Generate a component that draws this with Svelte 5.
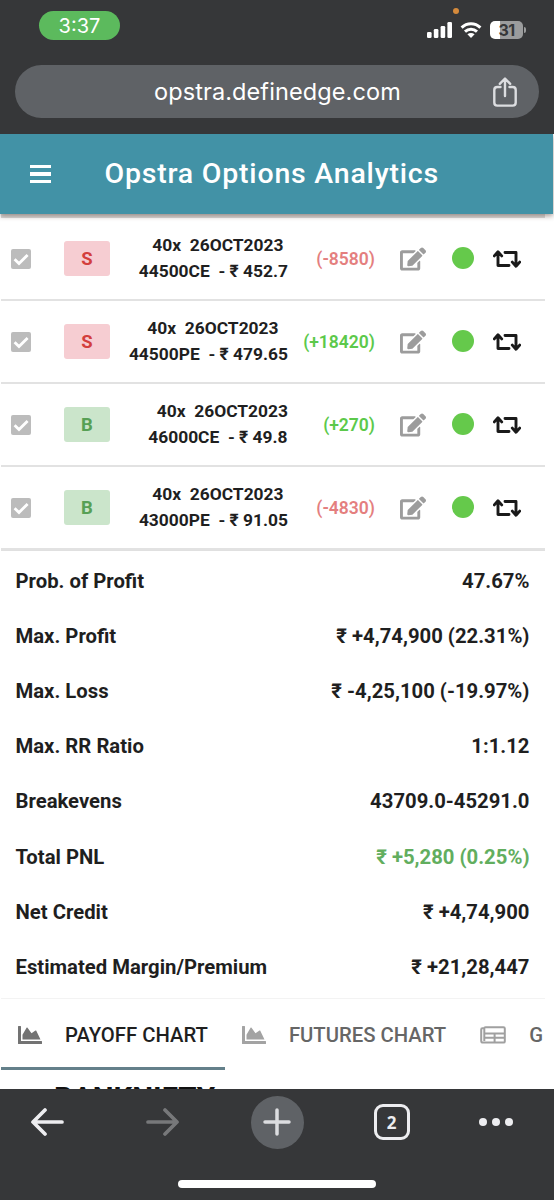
<script>
    let positions = [
        { side: 'S', qty: '40x', expiry: '26OCT2023', strike: '44500CE', price: '452.7', pnl: '-8580' },
        { side: 'S', qty: '40x', expiry: '26OCT2023', strike: '44500PE', price: '479.65', pnl: '+18420' },
        { side: 'B', qty: '40x', expiry: '26OCT2023', strike: '46000CE', price: '49.8', pnl: '+270' },
        { side: 'B', qty: '40x', expiry: '26OCT2023', strike: '43000PE', price: '91.05', pnl: '-4830' }
    ];

    let stats = [
        { label: 'Prob. of Profit', value: '47.67%' },
        { label: 'Max. Profit', value: '₹ +4,74,900 (22.31%)' },
        { label: 'Max. Loss', value: '₹ -4,25,100 (-19.97%)' },
        { label: 'Max. RR Ratio', value: '1:1.12' },
        { label: 'Breakevens', value: '43709.0-45291.0' },
        { label: 'Total PNL', value: '₹ +5,280 (0.25%)', gain: true },
        { label: 'Net Credit', value: '₹ +4,74,900' },
        { label: 'Estimated Margin/Premium', value: '₹ +21,28,447' }
    ];

    let tabs = [
        { label: 'PAYOFF CHART', icon: 'chart' },
        { label: 'FUTURES CHART', icon: 'chart' },
        { label: 'G', icon: 'table' }
    ];
    let activeTab = 0;
</script>

<div class="phone">
    <header class="browser-top">
        <div class="status">
            <span class="time">3:37</span>
            <span class="mic-dot"></span>
            <div class="status-icons">
                <svg class="signal" viewBox="0 0 26 16">
                    <rect x="0" y="10" width="4.6" height="6" rx="1.3" />
                    <rect x="6.8" y="7" width="4.6" height="9" rx="1.3" />
                    <rect x="13.6" y="4" width="4.6" height="12" rx="1.3" />
                    <rect x="20.4" y="0" width="4.6" height="16" rx="1.3" />
                </svg>
                <svg class="wifi" viewBox="0 0 22 16">
                    <path d="M1.6 5.6C7 .4 15 .4 20.4 5.6" />
                    <path d="M5 9.6C8.5 6.4 13.5 6.4 17 9.6" />
                    <path class="fill" d="M7.4 12.3Q11 9.6 14.6 12.3L11 16Z" />
                </svg>
                <div class="battery"><span>31</span></div>
                <span class="nub"></span>
            </div>
        </div>
        <div class="url-bar">
            <span class="url">opstra.definedge.com</span>
            <svg class="share" viewBox="0 0 24 30">
                <path d="M7.5 10H4.3Q1.3 10 1.3 13V25.5Q1.3 28.6 4.3 28.6H19.7Q22.7 28.6 22.7 25.5V13Q22.7 10 19.7 10H16.5M12 19V1.8M6.8 6.8L12 1.5L17.2 6.8" />
            </svg>
        </div>
    </header>

    <main>
        <div class="app-bar">
            <div class="burger"><i></i><i></i><i></i></div>
            <h1>Opstra Options Analytics</h1>
        </div>

        <div class="card">
            <div class="positions">
                {#each positions as pos}
                    <div class="row">
                        <span class="check">
                            <svg viewBox="0 0 20 20"><path d="M3.6 10.2L8 14.5L16.6 5.9" /></svg>
                        </span>
                        <span class="side {pos.side === 'S' ? 'sell' : 'buy'}">{pos.side}</span>
                        <div class="leg">
                            <div class="leg-inner">
                                <div class="expiry">{pos.qty}&nbsp; {pos.expiry}</div>
                                <div>{pos.strike}&nbsp; - ₹ {pos.price}</div>
                            </div>
                        </div>
                        <span class="pnl" class:up={pos.pnl[0] === '+'}>({pos.pnl})</span>
                        <svg class="edit" viewBox="0 0 576 512">
                            <path d="M402.6 83.2l90.2 90.2c3.8 3.8 3.8 10 0 13.8L274.4 405.6l-92.8 10.3c-12.4 1.4-22.9-9.1-21.5-21.5l10.3-92.8L388.8 83.2c3.8-3.8 10-3.8 13.8 0zm162-22.9l-48.8-48.8c-15.2-15.2-39.9-15.2-55.2 0l-35.4 35.4c-3.8 3.8-3.8 10 0 13.8l90.2 90.2c3.8 3.8 10 3.8 13.8 0l35.4-35.4c15.2-15.3 15.2-40 0-55.2zM384 346.2V448H64V128h229.8c3.2 0 6.2-1.3 8.5-3.5l40-40c7.6-7.6 2.2-20.5-8.5-20.5H48C21.5 64 0 85.5 0 112v352c0 26.5 21.5 48 48 48h352c26.5 0 48-21.5 48-48V306.2c0-10.7-12.9-16-20.5-8.5l-40 40c-2.2 2.3-3.5 5.3-3.5 8.5z" />
                        </svg>
                        <span class="dot"></span>
                        <svg class="swap" viewBox="0 0 28 18">
                            <path d="M5 2V15.5H16M12 2.5H23V15.5M1.3 5.9L5 1.8L8.7 5.9M19.3 12.1L23 16.2L26.7 12.1" />
                        </svg>
                    </div>
                {/each}
            </div>

            <div class="stats">
                {#each stats as stat}
                    <div class="stat">
                        <span>{stat.label}</span>
                        <span class:gain={stat.gain}>{stat.value}</span>
                    </div>
                {/each}
            </div>

            <nav class="tabs">
                {#each tabs as tab, i}
                    <div class="tab" class:active={i === activeTab}>
                        {#if tab.icon === 'chart'}
                            <svg class="chart" viewBox="0 64 512 384">
                                <path d="M500 384c6.6 0 12 5.4 12 12v40c0 6.6-5.4 12-12 12H12c-6.6 0-12-5.4-12-12V76c0-6.6 5.4-12 12-12h40c6.6 0 12 5.4 12 12v308h436zM372.7 159.5L288 216l-85.3-113.7c-5.1-6.8-15.5-6.3-19.9 1L96 248v104h384l-89.9-187.8c-3.2-6.5-11.4-8.7-17.4-4.7z" />
                            </svg>
                        {:else}
                            <svg class="news" viewBox="0 0 26 18">
                                <path d="M4.3 2.2H2.4Q1.2 2.2 1.2 3.4V14.7Q1.2 16.6 3 16.6H23.5Q24.8 16.6 24.8 15.4V2.6Q24.8 1.3 23.5 1.3H5.5Q4.3 1.3 4.3 2.6V15" />
                                <path d="M4.3 7.4H24.8M4.3 11.7H24.8M14.6 7.4V16.6" />
                            </svg>
                        {/if}
                        <span>{tab.label}</span>
                    </div>
                {/each}
            </nav>

            <h2>BANKNIFTY</h2>
        </div>
    </main>

    <footer>
        <div class="toolbar">
            <svg class="arrow" viewBox="0 0 33 28">
                <path d="M31 14H2.5M14 2L2 14L14 26" />
            </svg>
            <svg class="arrow off" viewBox="0 0 33 28">
                <path d="M2 14H30.5M19 2L31 14L19 26" />
            </svg>
            <div class="plus">
                <svg viewBox="0 0 28 28"><path d="M14 2V26M2 14H26" /></svg>
            </div>
            <div class="count">2</div>
            <div class="more"><i></i><i></i><i></i></div>
        </div>
        <div class="home"></div>
    </footer>
</div>

<style>
    :global(body) {
        margin: 0;
        background: #363739;
    }

    .phone {
        width: 554px;
        height: 1200px;
        display: flex;
        flex-direction: column;
        overflow: hidden;
        background: #363739;
        font-family: Roboto, "Noto Sans", sans-serif;
        color: #1f1f1f;
    }

    svg {
        display: block;
    }

    /* browser chrome */
    .browser-top {
        height: 134px;
        flex: none;
        font-family: Inter, "Liberation Sans", sans-serif;
        color: #fff;
    }

    .status {
        position: relative;
        height: 65px;
        box-sizing: border-box;
        padding: 11px 29px 0 39px;
        display: flex;
        justify-content: space-between;
        align-items: flex-start;
    }

    .time {
        width: 81px;
        height: 29px;
        line-height: 30px;
        border-radius: 15px;
        background: #5cba5d;
        text-align: center;
        font-size: 20px;
    }

    .mic-dot {
        position: absolute;
        left: 453px;
        top: 8px;
        width: 6px;
        height: 6px;
        border-radius: 50%;
        background: #d58a3c;
    }

    .status-icons {
        display: flex;
        align-items: center;
        padding-top: 10px;
    }

    .signal {
        width: 26px;
        height: 16px;
        fill: #fff;
        margin-right: 7px;
    }

    .wifi {
        width: 22px;
        height: 16px;
        fill: none;
        stroke: #fff;
        stroke-width: 3;
        margin-right: 8px;
    }

    .wifi .fill {
        fill: #fff;
        stroke: none;
    }

    .battery {
        width: 33px;
        height: 18px;
        border-radius: 5px;
        background: linear-gradient(to right, #fff 10px, #9b9c9d 10px);
        color: #363739;
        font-size: 16px;
        font-weight: 700;
        line-height: 18px;
        letter-spacing: -0.5px;
        text-align: center;
    }

    .nub {
        width: 2px;
        height: 6px;
        margin-left: 1px;
        border-radius: 0 2px 2px 0;
        background: #9b9c9d;
        margin-right: -1px;
    }

    .url-bar {
        height: 53px;
        margin: 0 15px;
        border-radius: 27px;
        background: #5f6266;
        display: flex;
        align-items: center;
        justify-content: space-between;
        padding: 0 22px 0 139px;
    }

    .url {
        font-size: 23.5px;
        letter-spacing: 0.1px;
    }

    .share {
        width: 24px;
        height: 30px;
        fill: none;
        stroke: #dcdde0;
        stroke-width: 2.4;
        stroke-linecap: round;
        stroke-linejoin: round;
    }

    /* page */
    main {
        height: 955px;
        flex: none;
        overflow: hidden;
        background: #fff;
    }

    .app-bar {
        position: relative;
        z-index: 1;
        height: 80px;
        width: 553px;
        background: #4292a6;
        box-shadow: 0 2px 5px rgba(60, 30, 20, 0.45);
        display: flex;
        align-items: center;
        box-sizing: border-box;
        padding-left: 30px;
    }

    .burger {
        display: flex;
        flex-direction: column;
        gap: 4px;
        width: 21px;
        margin-right: 53.5px;
    }

    .burger i {
        height: 3.5px;
        background: #fff;
    }

    h1 {
        margin: 0;
        color: #fff;
        font-size: 28.5px;
        font-weight: 500;
        letter-spacing: 0.79px;
        line-height: 34px;
        white-space: nowrap;
    }

    .card {
        width: 544px;
        margin-left: 1px;
        overflow: hidden;
    }

    .positions {
        border-top: 4px solid #dcdcdc;
        border-bottom: 1px solid #e0e0e0;
    }

    .row {
        height: 81px;
        border-bottom: 2px solid #e2e2e2;
        padding-left: 10px;
        display: grid;
        grid-template-columns: 53px 46px 178px 87px 51px 48px 47px;
        align-items: center;
        font-size: 17.4px;
        font-weight: 700;
    }

    .check {
        width: 20px;
        height: 20px;
        border-radius: 2px;
        background: #bcbcbc;
    }

    .check path {
        fill: none;
        stroke: #fff;
        stroke-width: 2.8;
    }

    .side {
        height: 35px;
        line-height: 36px;
        border-radius: 3px;
        text-align: center;
        font-size: 18.5px;
    }

    .sell {
        background: #f6cdd2;
        color: #d33f3d;
    }

    .buy {
        background: #cbe5cb;
        color: #57a055;
    }

    .leg {
        display: flex;
        justify-content: flex-end;
        padding-bottom: 1px;
    }

    .leg-inner {
        text-align: center;
        line-height: 26px;
        white-space: nowrap;
    }

    .expiry {
        padding-left: 9px;
    }

    .pnl {
        text-align: right;
        color: #e47f7f;
        font-size: 17.5px;
        font-weight: 600;
    }

    .pnl.up {
        color: #5cc94b;
    }

    .edit {
        width: 26px;
        height: 24px;
        justify-self: end;
        fill: #9c9c9c;
    }

    .dot {
        width: 22px;
        height: 22px;
        border-radius: 50%;
        background: #65c94b;
        justify-self: end;
        margin-bottom: 2px;
    }

    .swap {
        width: 28px;
        height: 18px;
        justify-self: end;
        fill: none;
        stroke: #1a1a1a;
        stroke-width: 2.9;
        stroke-linecap: round;
        stroke-linejoin: round;
    }

    .stats {
        padding: 2px 15.5px 0 14.5px;
        height: 448px;
        box-sizing: border-box;
        border-bottom: 1px solid #f3f3f3;
    }

    .stat {
        height: 55.2px;
        display: flex;
        justify-content: space-between;
        align-items: center;
        font-size: 20.3px;
        font-weight: 700;
    }

    .gain {
        color: #62ae5e;
    }

    .tabs {
        display: flex;
        height: 71px;
    }

    .tab {
        flex: none;
        box-sizing: border-box;
        height: 71px;
        padding: 3px 17px 0;
        border-bottom: 3px solid transparent;
        display: flex;
        align-items: center;
        gap: 23px;
        font-size: 20.3px;
        font-weight: 500;
        color: #666;
        white-space: nowrap;
    }

    .tab.active {
        color: #1f1f1f;
        border-color: #64808a;
    }

    .chart {
        width: 24px;
        height: 18px;
        fill: #a3a3a3;
    }

    .active .chart {
        fill: #737373;
    }

    .news {
        width: 26px;
        height: 18px;
        fill: none;
        stroke: #a0a0a0;
        stroke-width: 2;
    }

    h2 {
        margin: 11px 0 0 53px;
        font-size: 29.5px;
        line-height: 34px;
        font-weight: 700;
        color: #111;
    }

    /* bottom toolbar */
    footer {
        height: 111px;
    }

    .toolbar {
        height: 66px;
        display: grid;
        grid-template-columns: 94px 136px 94px 135px 74px;
        align-items: center;
        justify-items: center;
    }

    .arrow {
        width: 33px;
        height: 28px;
        fill: none;
        stroke: #ededf0;
        stroke-width: 3.7;
        stroke-linecap: round;
        stroke-linejoin: round;
    }

    .off {
        stroke: #77787a;
    }

    .plus {
        width: 53px;
        height: 53px;
        border-radius: 50%;
        background: #5f6266;
        display: flex;
        align-items: center;
        justify-content: center;
    }

    .plus svg {
        width: 28px;
        height: 28px;
        fill: none;
        stroke: #dcdde0;
        stroke-width: 3.5;
        stroke-linecap: round;
    }

    .count {
        width: 36px;
        height: 36px;
        box-sizing: border-box;
        border: 3px solid #ededf0;
        border-radius: 9px;
        color: #ededf0;
        font-size: 17px;
        font-weight: 700;
        line-height: 31px;
        text-align: center;
        font-family: "Noto Sans", sans-serif;
    }

    .more {
        display: flex;
        gap: 5px;
    }

    .more i {
        width: 8px;
        height: 8px;
        border-radius: 50%;
        background: #ededf0;
    }

    .home {
        width: 198px;
        height: 8px;
        margin: 25px auto 0;
        border-radius: 4px;
        background: #fff;
    }
</style>
